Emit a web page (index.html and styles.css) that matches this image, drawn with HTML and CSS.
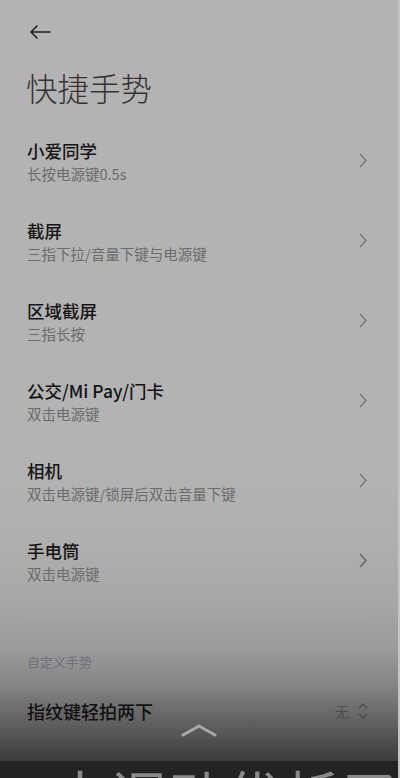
FILE: index.html
```html
<!DOCTYPE html>
<html lang="zh-CN">
<head>
<meta charset="utf-8">
<link rel="stylesheet" href="styles.css">
</head>
<body>
<div class="page">
  <div class="topbar">
    <svg class="back" width="22" height="14" viewBox="0 0 22 14"><path d="M21 7H2M8 1L2 7l6 6" fill="none" stroke="#222" stroke-width="1.6" stroke-linecap="round" stroke-linejoin="round"/></svg>
  </div>
  <h1 class="title">快捷手势</h1>
  <ul class="list">
    <li class="item"><div class="text"><div class="name">小爱同学</div><div class="sub">长按电源键0.5s</div></div><svg class="chev" width="8" height="15" viewBox="0 0 8 15"><path d="M1 1l6 6.5L1 14" fill="none" stroke="#777" stroke-width="1.5"/></svg></li>
    <li class="item"><div class="text"><div class="name">截屏</div><div class="sub">三指下拉/音量下键与电源键</div></div><svg class="chev" width="8" height="15" viewBox="0 0 8 15"><path d="M1 1l6 6.5L1 14" fill="none" stroke="#777" stroke-width="1.5"/></svg></li>
    <li class="item"><div class="text"><div class="name">区域截屏</div><div class="sub">三指长按</div></div><svg class="chev" width="8" height="15" viewBox="0 0 8 15"><path d="M1 1l6 6.5L1 14" fill="none" stroke="#777" stroke-width="1.5"/></svg></li>
    <li class="item"><div class="text"><div class="name">公交/Mi Pay/门卡</div><div class="sub">双击电源键</div></div><svg class="chev" width="8" height="15" viewBox="0 0 8 15"><path d="M1 1l6 6.5L1 14" fill="none" stroke="#777" stroke-width="1.5"/></svg></li>
    <li class="item"><div class="text"><div class="name">相机</div><div class="sub">双击电源键/锁屏后双击音量下键</div></div><svg class="chev" width="8" height="15" viewBox="0 0 8 15"><path d="M1 1l6 6.5L1 14" fill="none" stroke="#777" stroke-width="1.5"/></svg></li>
    <li class="item"><div class="text"><div class="name">手电筒</div><div class="sub">双击电源键</div></div><svg class="chev" width="8" height="15" viewBox="0 0 8 15"><path d="M1 1l6 6.5L1 14" fill="none" stroke="#666" stroke-width="1.5"/></svg></li>
  </ul>
  <div class="divider"></div>
  <div class="section">自定义手势</div>
  <div class="custom">
    <div class="name">指纹键轻拍两下</div>
    <div class="value">无<svg class="updown" width="10" height="16" viewBox="0 0 10 16"><path d="M1 5l4-4 4 4M1 11l4 4 4-4" fill="none" stroke="#4a4a4a" stroke-width="1.4"/></svg></div>
  </div>
  <svg class="swipe" width="36" height="14" viewBox="0 0 36 14"><path d="M2 12L18 3l16 9" fill="none" stroke="#a8a8a8" stroke-width="3" stroke-linecap="round" stroke-linejoin="round"/></svg>
  <div class="caption"><span>丶大调动优析了丫</span></div>
</div>
</body>
</html>
```
FILE: styles.css
```css
* { box-sizing: border-box; }
html, body { margin: 0; padding: 0; }
body {
  font-family: "Noto Sans CJK SC", "Noto Sans", sans-serif;
  background: #222;
}
.page {
  position: relative;
  width: 400px;
  height: 778px;
  overflow: hidden;
  background: linear-gradient(to bottom, #b3b3b3 0, #b3b3b3 470px, #afafaf 540px, #a7a7a7 600px, #9a9a9a 650px, #858585 685px, #6c6c6c 710px, #555 735px, #444 752px, #3d3d3d 761px, #232323 761px, #232323 778px);
  border-right: 2px solid #c2c6c6;
}
.topbar {
  height: 64px;
  padding-left: 29px;
  display: flex;
  align-items: center;
}
.back { display: block; }
.title {
  margin: 0;
  padding-left: 26px;
  font-size: 31.5px;
  line-height: 46px;
  font-weight: 300;
  color: #333;
}
.list {
  list-style: none;
  margin: 12px 0 0;
  padding: 0;
}
.item {
  height: 80px;
  padding: 17px 31px 17px 27px;
  display: flex;
  align-items: center;
  justify-content: space-between;
}
.name {
  font-size: 17.5px;
  line-height: 24px;
  font-weight: 500;
  color: #151515;
}
.sub {
  font-size: 14.5px;
  line-height: 22px;
  color: #6c6c6c;
}
.chev { display: block; margin-top: -3px; }
.divider {
  margin: 20px 30px 0 27px;
  height: 1px;
  background: #9c9c9c;
}
.section {
  margin-top: 29px;
  padding-left: 27px;
  font-size: 13px;
  line-height: 20px;
  color: #6f6f7e;
}
.custom {
  margin-top: 27px;
  padding: 0 30px 0 27px;
  display: flex;
  align-items: center;
  justify-content: space-between;
}
.custom .name { font-size: 18px; color: #101010; }
.value {
  display: flex;
  align-items: center;
  gap: 9px;
  font-size: 14px;
  color: #4c4c4c;
}
.updown { display: block; }
.swipe {
  position: absolute;
  left: 181px;
  top: 723px;
}
.caption {
  position: absolute;
  left: -6px;
  top: 761px;
  width: 420px;
  height: 17px;
  overflow: hidden;
}
.caption span {
  display: block;
  margin-top: 3px;
  font-size: 56px;
  line-height: 60px;
  letter-spacing: 2px;
  white-space: nowrap;
  color: #8a8a8a;
}
```
